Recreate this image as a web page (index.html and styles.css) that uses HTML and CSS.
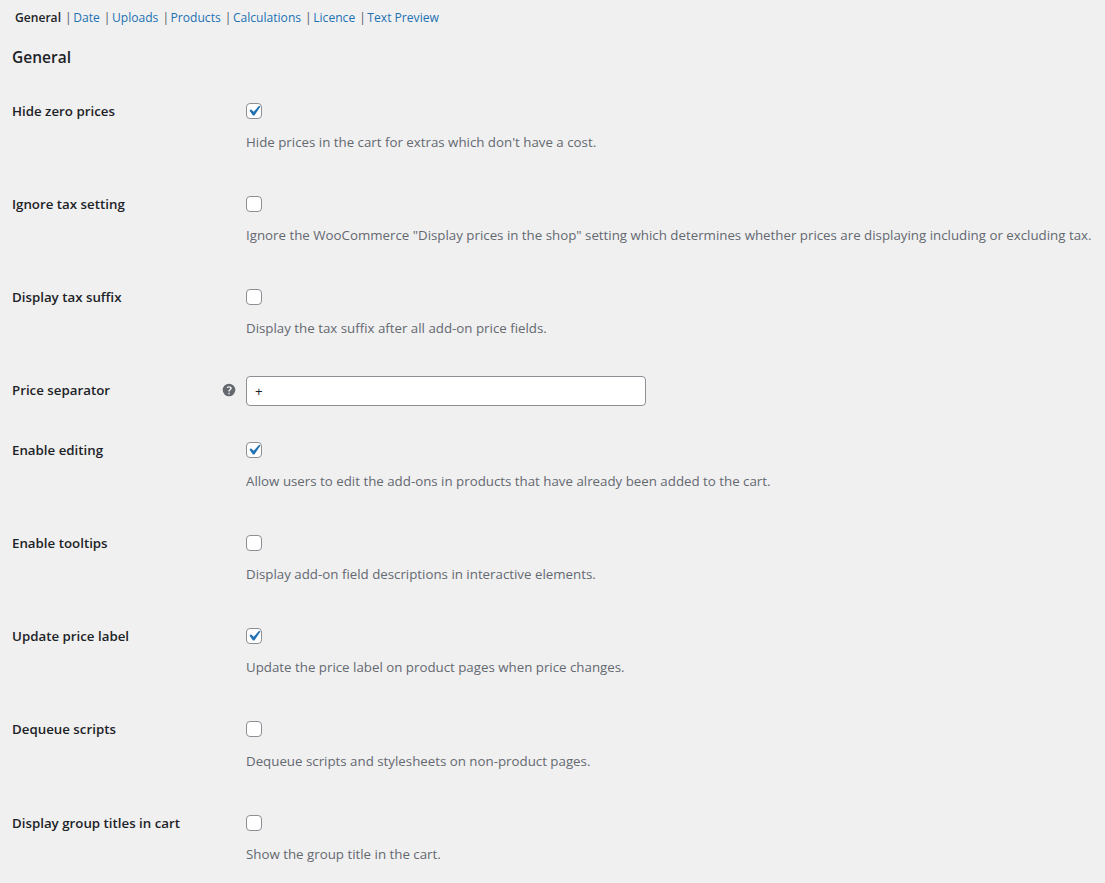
FILE: index.html
```html
<!DOCTYPE html>
<html lang="en">
<head>
  <meta charset="utf-8" />
  <title>General settings</title>
  <link rel="stylesheet" href="styles.css">
</head>
<body>
  <ul class="tabs">
    <li class="current">General</li>
    <li><a href="#">Date</a></li>
    <li><a href="#">Uploads</a></li>
    <li><a href="#">Products</a></li>
    <li><a href="#">Calculations</a></li>
    <li><a href="#">Licence</a></li>
    <li><a href="#">Text Preview</a></li>
  </ul>

  <h2>General</h2>

  <form class="settings">
    <div class="row">
      <label class="name" for="zero">Hide zero prices</label>
      <div class="field">
        <input id="zero" type="checkbox" checked>
        <p class="desc">Hide prices in the cart for extras which don't have a cost.</p>
      </div>
    </div>
    <div class="row">
      <label class="name" for="tax">Ignore tax setting</label>
      <div class="field">
        <input id="tax" type="checkbox">
        <p class="desc">Ignore the WooCommerce "Display prices in the shop" setting which determines whether prices are displaying including or excluding tax.</p>
      </div>
    </div>
    <div class="row">
      <label class="name" for="suffix">Display tax suffix</label>
      <div class="field">
        <input id="suffix" type="checkbox">
        <p class="desc">Display the tax suffix after all add-on price fields.</p>
      </div>
    </div>
    <div class="row row-text">
      <label class="name" for="sep">Price separator
        <span class="help">
          <svg viewBox="0 0 20 20" width="14" height="14"><path fill="#646970" fill-rule="evenodd" d="M10 1a9 9 0 1 0 0 18 9 9 0 0 0 0-18zm1 15H9v-2h2zm2.700-7.300c-.3.6-.9 1.100-1.500 1.600-.7.5-1.100.9-1.200 1.700H9c0-1.400.5-2.100 1.400-2.800.7-.5 1.200-.9 1.200-1.500 0-.7-.6-1.100-1.500-1.100-.9 0-1.600.4-2.200 1L6.700 6.200C7.700 5.200 8.800 4.700 10.200 4.700c2 0 3.700 1 3.700 2.800 0 .4-.1.800-.2 1.200z"/></svg>
        </span>
      </label>
      <div class="field">
        <input id="sep" class="text" type="text" value="+">
      </div>
    </div>
    <div class="row">
      <label class="name" for="edit">Enable editing</label>
      <div class="field">
        <input id="edit" type="checkbox" checked>
        <p class="desc">Allow users to edit the add-ons in products that have already been added to the cart.</p>
      </div>
    </div>
    <div class="row">
      <label class="name" for="tips">Enable tooltips</label>
      <div class="field">
        <input id="tips" type="checkbox">
        <p class="desc">Display add-on field descriptions in interactive elements.</p>
      </div>
    </div>
    <div class="row">
      <label class="name" for="label">Update price label</label>
      <div class="field">
        <input id="label" type="checkbox" checked>
        <p class="desc">Update the price label on product pages when price changes.</p>
      </div>
    </div>
    <div class="row">
      <label class="name" for="dequeue">Dequeue scripts</label>
      <div class="field">
        <input id="dequeue" type="checkbox">
        <p class="desc">Dequeue scripts and stylesheets on non-product pages.</p>
      </div>
    </div>
    <div class="row">
      <label class="name" for="group">Display group titles in cart</label>
      <div class="field">
        <input id="group" type="checkbox">
        <p class="desc">Show the group title in the cart.</p>
      </div>
    </div>
  </form>
</body>
</html>
```

FILE: styles.css
```css
:root{
  --bg:#f0f0f1;
  --text:#1d2327;
  --muted:#646970;
  --link:#2271b1;
  --border:#8c8f94;
}

html,body{height:100%}
body{
  margin:0; padding:0 12px; overflow:hidden;
  font-family:"Open Sans","Noto Sans",Arial,sans-serif;
  font-size:13.3px; line-height:1.4;
  background:var(--bg); color:var(--text);
}

/* tabs */
.tabs{
  display:flex; list-style:none; margin:0; padding:9px 0 0 3px;
  height:17px; line-height:18px; font-size:12.1px;
}
.tabs li{ white-space:nowrap; }
.tabs li + li::before{ content:"|"; color:#50575e; margin:0 1.5px 0 4px; }
.tabs a{ color:var(--link); text-decoration:none; }
.tabs .current{ font-weight:550; }

h2{
  margin:19px 0 0; font-size:15.5px; font-weight:600; line-height:24px;
}

.settings{ margin-top:19px; }

.row{ display:grid; grid-template-columns:234px 1fr; height:93.09px; padding-top:15px; box-sizing:border-box; }
.row-text{ height:60px; padding-top:9px; }

.name{
  display:flex; justify-content:space-between; align-items:center; align-self:start;
  margin-top:-1px; padding-right:10px;
  font-weight:600; line-height:18px;
}
.row-text .name{ margin-top:5px; }
.help{ display:block; height:14px; }
.help svg{ display:block; }

.desc{ margin:12.1px 0 0; color:var(--muted); line-height:22px; white-space:nowrap; }

input[type="checkbox"]{
  appearance:none; display:block; margin:0; width:16px; height:16px;
  border:1px solid var(--border); border-radius:4px; background:#fff;
  box-sizing:border-box;
}
input[type="checkbox"]:checked{
  background:#fff url("data:image/svg+xml;utf8,<svg xmlns='http://www.w3.org/2000/svg' viewBox='0 0 20 20'><path fill='%232271b1' d='M14.83 4.89l1.34.94-5.81 8.38H9.02L5.78 9.67l1.34-1.25 2.57 2.4z'/></svg>") center/21px 21px no-repeat;
}

.text{
  display:block; box-sizing:border-box; width:400px; height:30px; margin:0; padding:0 8px;
  border:1px solid var(--border); border-radius:4px; background:#fff;
  font:inherit; color:var(--text);
}
```
